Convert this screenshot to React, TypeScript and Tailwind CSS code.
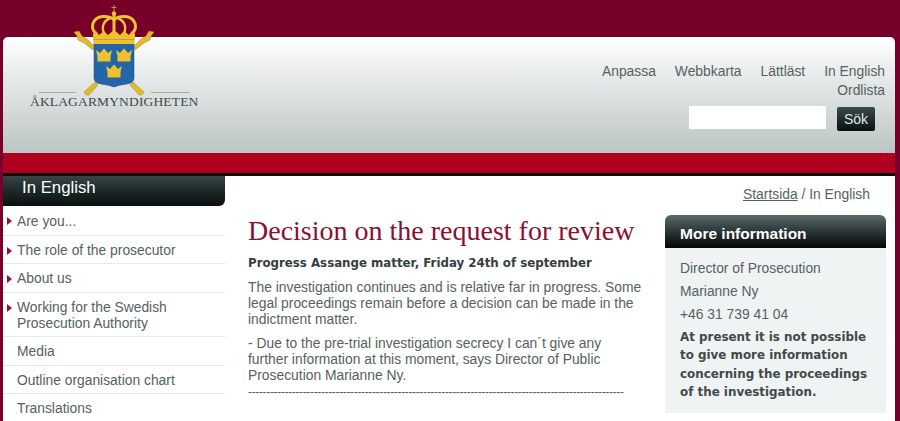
const sans = "font-['Liberation_Sans',Arial,sans-serif]";

function Logo() {
  const gold = "#efc12d";
  return (
    <div className="absolute left-[27px] top-[4px] w-[175px] h-[110px]">
      <svg width="175" height="96" viewBox="0 0 175 96" className="absolute left-0 top-0">
        <defs>
          <filter id="s"><feGaussianBlur stdDeviation="0.3" /></filter>
        </defs>
        <rect x="12" y="88" width="37" height="1" fill="#a3abab" />
        <rect x="124" y="88" width="39" height="1" fill="#a3abab" />
        <g filter="url(#s)">
          {/* batons */}
          <path d="M47 28 L52 27 L55 32 L60 35 L68 43 L66 46 L57 39 L51 36 L50 32 Z" fill="#e2b92f" stroke="#a88a20" strokeWidth="0.5" />
          <path d="M127 28 L122 27 L119 32 L114 35 L106 43 L108 46 L117 39 L123 36 L124 32 Z" fill="#e2b92f" stroke="#a88a20" strokeWidth="0.5" />
          <path d="M59 91 L57 88 L68 78 L71 81 L62 91 Z" fill="#e2b92f" stroke="#a88a20" strokeWidth="0.5" />
          <path d="M115 91 L117 88 L106 78 L103 81 L112 91 Z" fill="#e2b92f" stroke="#a88a20" strokeWidth="0.5" />
          {/* crown */}
          <path d="M87 1 v6 M84.5 3.5 h5" stroke="#c08a4a" strokeWidth="1.1" fill="none" />
          <path d="M69 30 C61 21 68 12 78 12.5 C83 13 86 14 87 16 C88 14 91 13 96 12.5 C106 12 113 21 105 30" fill="none" stroke={gold} strokeWidth="3" />
          <path d="M77 30 C74 22 77 16 84 14 M97 30 C100 22 97 16 90 14" fill="none" stroke={gold} strokeWidth="2.4" />
          <path d="M85.5 8 h3 v23 h-3 Z" fill={gold} />
          <circle cx="87" cy="9.5" r="2.2" fill={gold} />
          <path d="M66 36 L66 30 L69 27 L72 31 L77 27 L81 31 L87 26 L93 31 L97 27 L102 31 L105 27 L108 30 L108 36 Z" fill={gold} />
          {/* shield */}
          <path d="M67 36 H107 V74 Q107 79 100 80 Q92 81 87 83 Q82 81 74 80 Q67 79 67 74 Z" fill="#2465a8" stroke="#17477c" strokeWidth="0.5" />
          <rect x="67" y="36" width="40" height="4" fill={gold} />
          {[[77, 46], [97, 46], [87, 62]].map(([x, y], i) => (
            <g key={i} transform={`translate(${x} ${y})`}>
              <path d="M-6.5 6 H6.5 V11.5 H-6.5 Z" fill={gold} />
              <path d="M-6.5 6 L-8 0 L-4 3 L0 -1.5 L4 3 L8 0 L6.5 6 Z" fill={gold} />
            </g>
          ))}
        </g>
      </svg>
      <div className="absolute left-[3px] top-[89px] text-[13.5px] leading-[18px] tracking-[0.15px] whitespace-nowrap text-[#3d4a4a] font-['Liberation_Serif',serif]">
        ÅKLAGARMYNDIGHETEN
      </div>
    </div>
  );
}

function NavItem({ label, arrow, size }: { label: React.ReactNode; arrow?: boolean; size: string }) {
  return (
    <li className={`relative border-b border-[#e6e9e9] pl-[14px] ${size} text-[13.85px] leading-[16px] text-[#566161]`}>
      {arrow && <span className="absolute left-[4px] top-[11px] w-0 h-0 border-y-[4px] border-y-transparent border-l-[5px] border-l-[#a00a30]" />}
      {label}
    </li>
  );
}

export default function App() {
  return (
    <div className={`${sans} relative h-[421px] w-[900px] overflow-hidden bg-[#76002a] pt-[37px] pl-[3px] pr-[5px]`}>
      <header className="flex h-[116px] justify-end rounded-t-[5px] bg-gradient-to-b from-white to-[#bcc4c4] pr-[10px] pt-[25px]">
        <div className="flex flex-col items-end text-[13.85px] leading-[19px] text-[#566161]">
          <nav className="flex gap-[19px]">
            <span>Anpassa</span>
            <span>Webbkarta</span>
            <span>Lättläst</span>
            <span>In English</span>
          </nav>
          <span>Ordlista</span>
          <div className="mt-[6px] mr-[10px] flex items-start gap-[11px]">
            <input aria-label="Sök" className="h-[23px] w-[137px] bg-white" />
            <button className="mt-[1px] h-[24px] w-[38px] rounded-[2px] bg-gradient-to-b from-[#3c4c4c] to-[#0b1010] text-[14px] text-[#dfe6e6]">Sök</button>
          </div>
        </div>
      </header>
      <div className="h-[20px] bg-[#af0020]" />
      <div className="h-[3px] bg-[#0a0a0a]" />
      <div className="flex h-[245px] bg-white">
        <aside className="w-[222px] shrink-0">
          <div className="h-[30px] rounded-br-[6px] bg-gradient-to-b from-[#364545] to-[#0a0f0f] pl-[19px] pt-[1px] text-[16.8px] leading-[22px] text-white">In English</div>
          <ul className="list-none">
            <NavItem size="h-[30px] pt-[7px]" arrow label="Are you..." />
            <NavItem size="h-[28px] pt-[6px]" arrow label="The role of the prosecutor" />
            <NavItem size="h-[29px] pt-[6px]" arrow label="About us" />
            <NavItem size="h-[44px] pt-[6px]" arrow label={<>Working for the Swedish<br />Prosecution Authority</>} />
            <NavItem size="h-[29px] pt-[6px]" label="Media" />
            <NavItem size="h-[28px] pt-[6px]" label="Outline organisation chart" />
            <NavItem size="h-[29px] pt-[6px]" label="Translations" />
          </ul>
        </aside>
        <div className="flex min-w-0 grow flex-col">
          <div className="h-[39px] pr-[25px] pt-[9px] text-right text-[13.85px] leading-[18px] text-[#566161]">
            <span className="underline">Startsida</span> / In English
          </div>
          <div className="flex">
            <main className="ml-[23px] w-[400px] shrink-0 text-[13.85px] leading-[16px] text-[#566161]">
              <h1 className="font-['Liberation_Serif',serif] text-[28px] leading-[32px] text-[#8a0f35] whitespace-nowrap">Decision on the request for review</h1>
              <p className="mt-[8px] font-['DejaVu_Sans',Verdana,sans-serif] text-[11.8px] font-bold leading-[16px] text-[#354040] whitespace-nowrap">Progress Assange matter, Friday 24th of september</p>
              <p className="mt-[8px]">The investigation continues and is relative far in progress. Some<br />legal proceedings remain before a decision can be made in the<br />indictment matter.</p>
              <p className="mt-[8px]">- Due to the pre-trial investigation secrecy I can´t give any<br />further information at this moment, says Director of Public<br />Prosecution Marianne Ny.</p>
              <p className="mt-[3px] whitespace-nowrap text-[12px] leading-[12px] tracking-[-0.35px]">{"-".repeat(103)}</p>
            </main>
            <aside className="ml-[17px] w-[221px] shrink-0">
              <div className="h-[33px] rounded-t-[6px] bg-gradient-to-b from-[#5a6c6c] to-[#050808] pl-[15px] pt-[9px] text-[15.5px] font-bold leading-[20px] text-white">More information</div>
              <div className="h-[165px] bg-[#eff3f3] pl-[15px] pt-[9px] text-[13.85px] text-[#566161]">
                <p className="leading-[23px]">Director of Prosecution</p>
                <p className="leading-[23px]">Marianne Ny</p>
                <p className="leading-[23px]">+46 31 739 41 04</p>
                <p className="mt-[2px] font-['DejaVu_Sans',Verdana,sans-serif] text-[11.9px] font-bold leading-[18.3px] text-[#3f4a4a] whitespace-nowrap">At present it is not possible<br />to give more information<br />concerning the proceedings<br />of the investigation.</p>
              </div>
            </aside>
          </div>
        </div>
      </div>
      <Logo />
    </div>
  );
}
